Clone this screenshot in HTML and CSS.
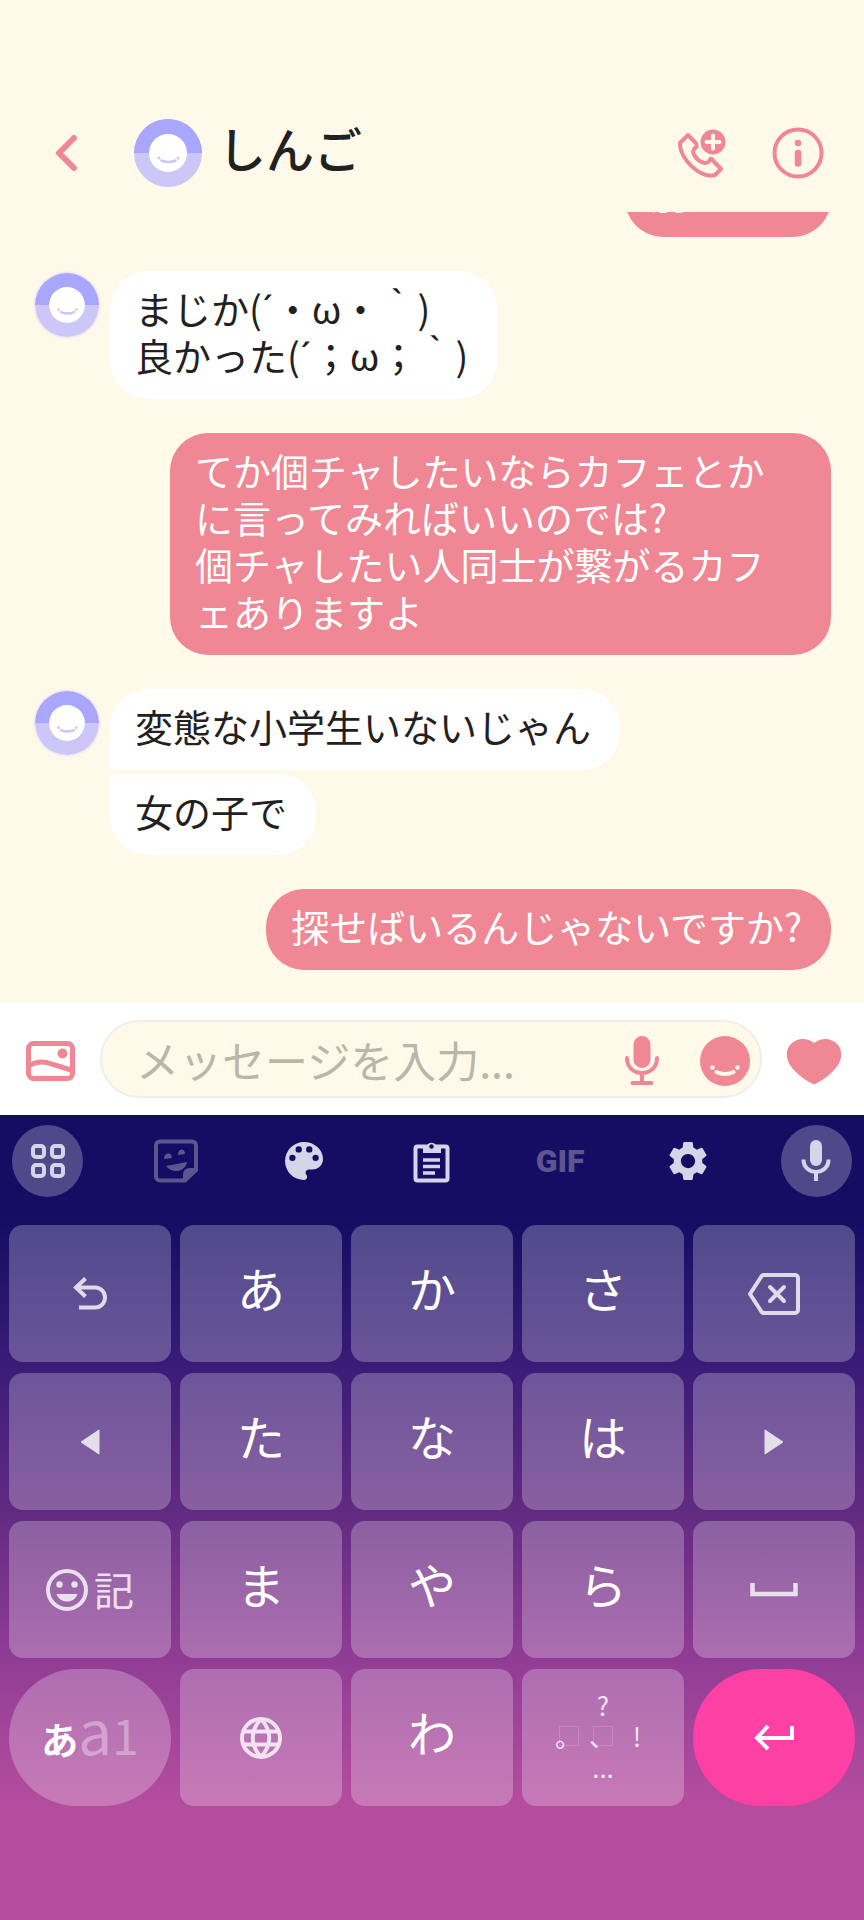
FILE: index.html
```
<!DOCTYPE html>
<html lang="ja">
<head>
    <meta charset="UTF-8">
    <meta name="viewport" content="width=device-width, initial-scale=1.0">
    <title>しんご</title>
    <link rel="stylesheet" href="styles.css">
</head>
<body>
    <!-- Shared avatar drawing -->
    <svg class="defs" aria-hidden="true">
        <symbol id="avatar" viewBox="0 0 68 68">
            <circle cx="34" cy="34" r="34" fill="#cdc7f7"/>
            <path d="M0 34a34 34 0 0 1 68 0z" fill="#a9a7fd"/>
            <circle cx="34" cy="34" r="19" fill="#fff"/>
            <circle cx="25" cy="39" r="1.5" fill="#cdc7f7"/>
            <circle cx="44" cy="39" r="1.5" fill="#cdc7f7"/>
            <path d="M27.500 41.500q7 3 14 0" fill="none" stroke="#cdc7f7" stroke-width="2.500" stroke-linecap="round"/>
        </symbol>
    </svg>

    <header class="header">
        <button class="icon-button back" aria-label="戻る">
            <svg width="24" height="38" viewBox="0 0 24 38"><path d="M20 4L5 19l15 15" fill="none" stroke="currentColor" stroke-width="6" stroke-linecap="round" stroke-linejoin="round"/></svg>
        </button>
        <svg class="header-avatar"><use href="#avatar"/></svg>
        <h1>しんご</h1>
        <button class="icon-button" aria-label="通話">
            <svg width="48" height="50" viewBox="0 0 48 50">
                <path d="M10 7L20 17.500q-7 5-4 9c2 4 6 7 9 8 4 2 7-2 8-4L43 41l-6 6C22 51 1 30 2 15Z" fill="none" stroke="currentColor" stroke-width="4" stroke-linejoin="round"/>
                <circle cx="35" cy="14" r="15" fill="#fff9ea"/>
                <circle cx="35" cy="14" r="12.500" fill="currentColor"/>
                <path d="M35 7.500v13M28.500 14h13" stroke="#fff9ea" stroke-width="4" stroke-linecap="round"/>
            </svg>
        </button>
        <button class="icon-button" aria-label="情報">
            <svg width="52" height="52" viewBox="0 0 52 52">
                <circle cx="26" cy="26" r="23.500" fill="none" stroke="currentColor" stroke-width="4"/>
                <circle cx="26" cy="16" r="3.300" fill="currentColor"/>
                <path d="M26 26v10.500" stroke="currentColor" stroke-width="6.500" stroke-linecap="round"/>
            </svg>
        </button>
    </header>

    <!-- Messages, newest at the bottom -->
    <main class="chat">
        <div class="group mine">
            <p class="bubble">別にいい</p>
        </div>
        <div class="group">
            <svg class="avatar"><use href="#avatar"/></svg>
            <div class="bubbles">
                <p class="bubble">まじか(<span class="accent">´</span>・ω・｀)<br>良かった(<span class="accent">´</span>；ω；｀)</p>
            </div>
        </div>
        <div class="group mine">
            <p class="bubble">てか個チャしたいならカフェとかに言ってみればいいのでは?<br>個チャしたい人同士が繋がるカフェありますよ</p>
        </div>
        <div class="group">
            <svg class="avatar"><use href="#avatar"/></svg>
            <div class="bubbles">
                <p class="bubble">変態な小学生いないじゃん</p>
                <p class="bubble">女の子で</p>
            </div>
        </div>
        <div class="group mine">
            <p class="bubble">探せばいるんじゃないですか?</p>
        </div>
    </main>

    <form class="composer">
        <button type="button" class="icon-button" aria-label="画像">
            <svg width="50" height="40" viewBox="0 0 50 40">
                <rect x="2.500" y="2.500" width="44" height="35" rx="5" fill="none" stroke="currentColor" stroke-width="5"/>
                <circle cx="36.500" cy="12.500" r="5" fill="currentColor"/>
                <path d="M3 24.500c7-4 16-4.500 24-1l18 5.500" fill="none" stroke="currentColor" stroke-width="5"/>
            </svg>
        </button>
        <div class="field">
            <input type="text" placeholder="メッセージを入力..." aria-label="メッセージ">
            <button type="button" class="icon-button" aria-label="音声">
                <svg width="36" height="50" viewBox="0 0 36 50">
                    <rect x="9.500" y="0" width="17" height="32" rx="8.500" fill="currentColor"/>
                    <path d="M3 22c0 20 30 20 30 0M18 38v8M8.500 47h19" fill="none" stroke="currentColor" stroke-width="4" stroke-linecap="round"/>
                </svg>
            </button>
            <button type="button" class="icon-button" aria-label="スタンプ">
                <svg width="50" height="50" viewBox="0 0 50 50">
                    <circle cx="25" cy="25" r="25" fill="currentColor"/>
                    <circle cx="12.500" cy="31.500" r="2.300" fill="#fff9ea"/>
                    <circle cx="37.500" cy="31.500" r="2.300" fill="#fff9ea"/>
                    <path d="M16.500 36q8.500 4 17 0" fill="none" stroke="#fff9ea" stroke-width="4" stroke-linecap="round"/>
                </svg>
            </button>
        </div>
        <button type="button" class="icon-button" aria-label="ハート">
            <svg width="56" height="47" viewBox="0 0 56 47"><path d="M28 5C21 0 11-1 4 7-2 15 1 25 8 32q8 9 20 14.500Q40 41 48 32c7-7 10-17 4-25-7-8-17-7-24-2Z" fill="currentColor"/></svg>
        </button>
    </form>

    <section class="keyboard">
        <div class="toolbar">
            <button class="tool round" aria-label="メニュー">
                <svg width="36" height="36" viewBox="0 0 36 36" fill="none" stroke="currentColor" stroke-width="4">
                    <rect x="3" y="3" width="11" height="11" rx="3"/><rect x="22" y="3" width="11" height="11" rx="3"/>
                    <rect x="3" y="22" width="11" height="11" rx="3"/><rect x="22" y="22" width="11" height="11" rx="3"/>
                </svg>
            </button>
            <button class="tool faded" aria-label="ステッカー">
                <svg width="44" height="44" viewBox="0 0 44 44">
                    <path d="M6 2.500h32a4 4 0 0 1 4 4V31L31 41.500H6a4 4 0 0 1-4-4v-31a4 4 0 0 1 4-4Z" fill="none" stroke="currentColor" stroke-width="4"/>
                    <path d="M29 42V36q0-7 7-7h7L30 42zM10 20c0-7 8-7 8-1zM24 16c0-7 7-7 7-1zM12 27l21-4c-1 9-14 13-21 4Z" fill="currentColor"/>
                </svg>
            </button>
            <button class="tool" aria-label="テーマ">
                <svg width="38" height="38" viewBox="3 3 18 18"><path fill="currentColor" d="M12 3a9 9 0 0 0 0 18c.830 0 1.500-.670 1.500-1.500 0-.390-.150-.740-.390-1.010-.230-.260-.380-.610-.380-.990 0-.830.670-1.500 1.500-1.500H16c2.760 0 5-2.240 5-5 0-4.420-4.030-8-9-8zm-5.500 9a1.500 1.500 0 1 1 0-3 1.500 1.500 0 0 1 0 3zm3-4a1.500 1.500 0 1 1 0-3 1.500 1.500 0 0 1 0 3zm5 0a1.500 1.500 0 1 1 0-3 1.500 1.500 0 0 1 0 3zm3 4a1.500 1.500 0 1 1 0-3 1.500 1.500 0 0 1 0 3z"/></svg>
            </button>
            <button class="tool" aria-label="クリップボード">
                <svg width="38" height="43" viewBox="0 0 38 43">
                    <rect x="2.500" y="6.500" width="32" height="34" rx="2" fill="none" stroke="currentColor" stroke-width="4"/>
                    <path d="M10 5h4a5.500 5.500 0 0 1 9 0h5v8H10z" fill="currentColor"/>
                    <circle cx="18.500" cy="6.500" r="2.200" fill="#140d63"/>
                    <path d="M10 20h17M10 26.500h17M10 33h12" stroke="currentColor" stroke-width="3.500"/>
                </svg>
            </button>
            <button class="tool faded gif">GIF</button>
            <button class="tool" aria-label="設定">
                <svg width="38" height="38" viewBox="2.400 2.400 19.200 19.200"><path fill="currentColor" d="M19.140 12.940c.040-.300.060-.610.060-.940 0-.320-.020-.640-.070-.940l2.030-1.580a.490.490 0 0 0 .120-.610l-1.920-3.320a.488.488 0 0 0-.590-.220l-2.390.960c-.500-.380-1.030-.700-1.620-.940l-.360-2.540a.484.484 0 0 0-.480-.410h-3.840c-.240 0-.430.170-.470.410l-.360 2.540c-.590.240-1.130.570-1.620.940l-2.390-.960c-.220-.080-.470 0-.590.220L2.740 8.870c-.120.210-.080.470.120.610l2.030 1.580c-.050.300-.090.630-.090.940s.020.640.070.940l-2.030 1.580a.490.490 0 0 0-.120.610l1.920 3.320c.120.220.370.290.590.220l2.390-.960c.500.380 1.030.700 1.620.940l.360 2.540c.050.240.240.410.480.410h3.840c.240 0 .440-.170.470-.410l.360-2.540c.590-.240 1.130-.560 1.620-.940l2.390.960c.220.080.470 0 .590-.220l1.920-3.320c.120-.220.070-.470-.120-.610l-2.010-1.580zM12 15.600A3.610 3.610 0 0 1 8.400 12c0-1.980 1.620-3.600 3.600-3.600s3.600 1.620 3.600 3.600-1.620 3.600-3.600 3.600z"/></svg>
            </button>
            <button class="tool round" aria-label="音声入力">
                <svg width="30" height="42" viewBox="0 0 30 42">
                    <rect x="9" y="0" width="12" height="26" rx="6" fill="currentColor"/>
                    <path d="M2.500 19.500c0 16.500 25 16.500 25 0M15 32v9" fill="none" stroke="currentColor" stroke-width="4"/>
                </svg>
            </button>
        </div>

        <div class="keys">
            <button class="key" aria-label="逆順">
                <svg width="36" height="36" viewBox="0 0 36 36" fill="none" stroke="currentColor" stroke-width="4"><path d="M13.500 2.500L4 11.500l9.500 9M5 11.500h18a9.500 9.500 0 0 1 0 20H7"/></svg>
            </button>
            <button class="key kana">あ</button>
            <button class="key kana">か</button>
            <button class="key kana">さ</button>
            <button class="key" aria-label="削除">
                <svg width="54" height="44" viewBox="0 0 54 44" fill="none" stroke="currentColor" stroke-width="4" stroke-linejoin="round"><path d="M17 3h31a3 3 0 0 1 3 3v32a3 3 0 0 1-3 3H17q-2 0-3-2L3 22 14 5q1-2 3-2Z"/><path d="M23 15l14 14M37 15L23 29" stroke-linecap="round"/></svg>
            </button>

            <button class="key" aria-label="左">
                <svg width="20" height="26" viewBox="0 0 20 26"><path d="M1 13L19 1v24z" fill="currentColor" stroke="currentColor" stroke-linejoin="round"/></svg>
            </button>
            <button class="key kana">た</button>
            <button class="key kana">な</button>
            <button class="key kana">は</button>
            <button class="key" aria-label="右">
                <svg width="20" height="26" viewBox="0 0 20 26"><path d="M19 13L1 1v24z" fill="currentColor" stroke="currentColor" stroke-linejoin="round"/></svg>
            </button>

            <button class="key symbols">
                <svg width="42" height="42" viewBox="0 0 42 42">
                    <circle cx="21" cy="21" r="19" fill="none" stroke="currentColor" stroke-width="4"/>
                    <circle cx="13.500" cy="15.500" r="3.200" fill="currentColor"/>
                    <circle cx="28.500" cy="15.500" r="3.200" fill="currentColor"/>
                    <path d="M10.500 25h21c-3 10-18 10-21 0Z" fill="currentColor"/>
                </svg>
                <span>記</span>
            </button>
            <button class="key kana">ま</button>
            <button class="key kana">や</button>
            <button class="key kana">ら</button>
            <button class="key" aria-label="空白">
                <svg width="48" height="14" viewBox="0 0 48 14"><path d="M2.500 0v11h43V0" fill="none" stroke="currentColor" stroke-width="4.500"/></svg>
            </button>

            <button class="key pill mode"><b>あ</b><span class="latin">a</span><span class="digit">1</span></button>
            <button class="key" aria-label="言語">
                <svg width="42" height="42" viewBox="0 0 42 42" fill="none" stroke="currentColor" stroke-width="4"><circle cx="21" cy="21" r="19"/><path d="M3 14.500h36M3 27.500h36M21 2c-11 12-11 26 0 38M21 2c11 12 11 26 0 38"/></svg>
            </button>
            <button class="key kana">わ</button>
            <button class="key marks">
                <span class="top">?</span>
                <span class="boxed">。</span><span class="boxed">、</span><span>!</span>
                <span class="bottom">...</span>
            </button>
            <button class="key pill enter" aria-label="改行">
                <svg width="42" height="28" viewBox="0 0 42 28" fill="none" stroke="currentColor" stroke-width="4"><path d="M15 2L4 14l11 11M4 14h35V2"/></svg>
            </button>
        </div>
    </section>
</body>
</html>
```
FILE: styles.css
```
* {
    margin: 0;
    padding: 0;
    box-sizing: border-box;
}

body {
    display: flex;
    flex-direction: column;
    min-height: 100vh;
    background-color: #fff9ea;
    color: #22211f;
    font-family: "Noto Sans CJK JP", sans-serif;
}

button {
    border: none;
    background: none;
    color: inherit;
    font-family: inherit;
    cursor: pointer;
}

svg {
    display: block;
    flex-shrink: 0;
}

.defs {
    position: absolute;
    width: 0;
    height: 0;
}

.icon-button {
    flex-shrink: 0;
    color: #f08794;
}

/* Header */
.header {
    display: flex;
    align-items: center;
    height: 212px;
    padding: 94px 40px 0 54px;
}

.header > * {
    flex-shrink: 0;
}

.header-avatar {
    width: 68px;
    height: 68px;
    margin: 0 16px 0 56px;
}

.header h1 {
    flex: 1;
    font-size: 48px;
    font-weight: 500;
    line-height: 60px;
    padding-bottom: 12px;
}

.header .icon-button + .icon-button {
    margin-left: 46px;
}

/* Chat */
.chat {
    flex: 1 0 0;
    min-height: 0;
    display: flex;
    flex-direction: column;
    justify-content: flex-end;
    gap: 34px;
    padding: 0 33px 33px 35px;
    overflow: hidden;
}

.group {
    display: flex;
    flex-shrink: 0;
    gap: 11px;
}

.avatar {
    width: 64px;
    height: 64px;
    margin-top: 2px;
    border-radius: 50%;
    box-shadow: 0 0 3px #cdc7f7;
}

.bubbles {
    display: flex;
    flex-direction: column;
    align-items: flex-start;
    gap: 4px;
}

.bubble {
    max-width: 661px;
    padding: 13px 29px 21px 25px;
    border-radius: 38px;
    background-color: #fff;
    font-size: 38px;
    line-height: 47px;
}

/* Narrow acute used in the kaomoji */
.accent {
    font-family: Roboto, sans-serif;
    line-height: 1;
}

/* Messages in a row join on the left side */
.bubbles .bubble:not(:last-child) {
    border-bottom-left-radius: 4px;
}

.bubbles .bubble:not(:first-child) {
    border-top-left-radius: 4px;
}

.mine {
    justify-content: flex-end;
}

.mine .bubble {
    background-color: #f08794;
    color: #fff;
}

/* Message input */
.composer {
    display: flex;
    align-items: center;
    gap: 24px;
    height: 112px;
    padding: 0 22px 0 26px;
    background-color: #fff;
}

.composer .icon-button {
    padding-top: 4px;
}

.field {
    flex: 1;
    min-width: 0;
    display: flex;
    align-items: center;
    gap: 40px;
    height: 78px;
    padding: 0 10px 0 34px;
    border: 2px solid #efeeec;
    border-radius: 39px;
    background-color: #fff9ea;
}

.field input {
    flex: 1;
    min-width: 0;
    border: none;
    outline: none;
    background: none;
    font-family: inherit;
    font-size: 43px;
}

.field input::placeholder {
    color: #bab6a8;
}

/* Keyboard */
.keyboard {
    padding: 10px 9px 114px;
    background: linear-gradient(#140d63 0, #140d63 105px, #3a1c78 250px, #632b82 400px, #923d96 550px, #b54d9f 690px, #b54d9f 100%);
    color: #fff;
}

.toolbar {
    display: flex;
    justify-content: space-between;
    padding: 0 3px;
    margin-bottom: 28px;
}

.tool {
    display: flex;
    align-items: center;
    justify-content: center;
    width: 71px;
    height: 72px;
    color: #d6d4e8;
}

.round {
    border-radius: 50%;
    background-color: rgba(255, 255, 255, 0.25);
}

.faded {
    color: #5b568f;
}

.gif {
    font-family: Roboto, sans-serif;
    font-size: 32px;
    font-weight: 900;
}

.keys {
    display: grid;
    grid-template-columns: repeat(5, 1fr);
    grid-auto-rows: 137px;
    gap: 11px 9px;
}

.key {
    display: flex;
    align-items: center;
    justify-content: center;
    min-width: 0;
    border-radius: 14px;
    background-color: rgba(255, 255, 255, 0.25);
    font-size: 48px;
    line-height: 60px;
}

.key svg {
    opacity: 0.8;
}

.kana {
    padding-bottom: 14px;
}

.pill {
    border-radius: 68px;
}

.symbols {
    gap: 6px;
    font-size: 40px;
}

.symbols span {
    opacity: 0.8;
    padding-bottom: 2px;
}

.mode {
    align-items: baseline;
    padding-top: 30px;
}

.mode b {
    font-size: 37px;
}

.mode .latin,
.mode .digit {
    color: rgba(255, 255, 255, 0.35);
}

.mode .latin {
    font-size: 60px;
}

.marks {
    display: grid;
    grid-template-columns: repeat(3, 34px);
    align-content: center;
    justify-items: center;
    font-size: 26px;
    line-height: 24px;
    color: rgba(255, 255, 255, 0.85);
    row-gap: 7px;
    padding-bottom: 4px;
}

.marks .top,
.marks .bottom {
    grid-column: 1 / -1;
}

/* Faint full-width cell behind the punctuation */
.boxed {
    width: 20px;
    height: 20px;
    border: 1px solid rgba(255, 255, 255, 0.15);
    text-indent: -5px;
    line-height: 18px;
}

.enter {
    background-color: #fc40a4;
}

.enter svg {
    opacity: 1;
}
```
